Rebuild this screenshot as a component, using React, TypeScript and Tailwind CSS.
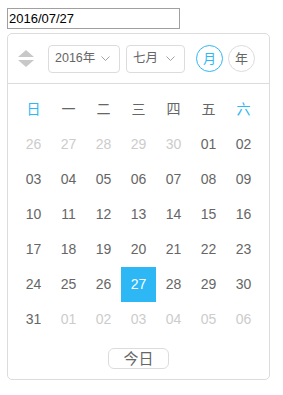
import React, { useState } from "react";

const font = { fontFamily: '"Liberation Sans", "Noto Sans CJK SC", sans-serif' };

const weekDays = ["日", "一", "二", "三", "四", "五", "六"];

type Day = { label: string; current: boolean };

function buildDays(): Day[] {
    const days: Day[] = [];
    for (let d = 26; d <= 30; d++) days.push({ label: String(d), current: false });
    for (let d = 1; d <= 31; d++) days.push({ label: String(d).padStart(2, "0"), current: true });
    for (let d = 1; d <= 6; d++) days.push({ label: String(d).padStart(2, "0"), current: false });
    return days;
}

function Chevron() {
    return (
        <svg width="9" height="5" viewBox="0 0 9 5" className="ml-auto">
            <path d="M0.5 0.5 L4.5 4.5 L8.5 0.5" fill="none" stroke="#999" strokeWidth="0.9" />
        </svg>
    );
}

export default function App() {
    const [selected, setSelected] = useState("27");
    const [value, setValue] = useState("2016/07/27");
    const days = buildDays();

    return (
        <div className="pl-[7px] pt-2" style={font}>
            <input
                type="text"
                value={value}
                onChange={(e) => setValue(e.target.value)}
                className="block w-[173px] h-[21px] border border-[#a0a0a0] px-[1px] text-[13px] text-black outline-none"
                style={font}
            />
            <div className="mt-[4px] w-[263px] rounded-[5px] border border-[#dcdcdc] bg-white">
                <div className="flex h-[50px] items-center border-b border-[#dcdcdc] pl-[10px]">
                    <div className="flex w-[16px] flex-col gap-[3px]">
                        <svg width="16" height="7" viewBox="0 0 16 7">
                            <polygon points="8,0 16,7 0,7" fill="#c8c8c8" />
                        </svg>
                        <svg width="16" height="7" viewBox="0 0 16 7">
                            <polygon points="0,0 16,0 8,7" fill="#c8c8c8" />
                        </svg>
                    </div>
                    <div className="ml-[14px] flex h-[28px] w-[72px] items-center rounded-[4px] border border-[#dcdcdc] pl-[6px] pr-[9px] text-[12.5px] text-[#666]">
                        2016年
                        <Chevron />
                    </div>
                    <div className="ml-[6px] flex h-[28px] w-[59px] items-center rounded-[4px] border border-[#dcdcdc] pl-[6px] pr-[9px] text-[12.5px] text-[#666]">
                        七月
                        <Chevron />
                    </div>
                    <div className="ml-[11px] flex h-[27px] w-[27px] items-center justify-center rounded-full border border-[#2db7f5] text-[13px] text-[#2db7f5]">
                        月
                    </div>
                    <div className="ml-[5px] flex h-[27px] w-[27px] items-center justify-center rounded-full border border-[#dcdcdc] text-[13px] text-[#666]">
                        年
                    </div>
                </div>
                <div className="px-2 pt-2">
                    <div className="grid grid-cols-7">
                        {weekDays.map((w, i) => (
                            <div
                                key={w}
                                className={`flex h-[35px] items-center justify-center text-[14px] ${i === 0 || i === 6 ? "text-[#2db7f5]" : "text-[#666]"}`}
                            >
                                {w}
                            </div>
                        ))}
                        {days.map((d, i) => {
                            const isSel = d.current && d.label === selected;
                            return (
                                <div
                                    key={i}
                                    onClick={() => d.current && setSelected(d.label)}
                                    className={`flex h-[35px] cursor-pointer items-center justify-center text-[14px] ${isSel ? "bg-[#2db7f5] text-white" : d.current ? "text-[#666]" : "text-[#ccc]"}`}
                                >
                                    {d.label}
                                </div>
                            );
                        })}
                    </div>
                </div>
                <div className="flex justify-center pt-[11px] pb-[10px]">
                    <button className="h-[21px] w-[61px] rounded-[6px] border border-[#dcdcdc] text-[15px] leading-none text-[#666]">
                        今日
                    </button>
                </div>
            </div>
        </div>
    );
}
